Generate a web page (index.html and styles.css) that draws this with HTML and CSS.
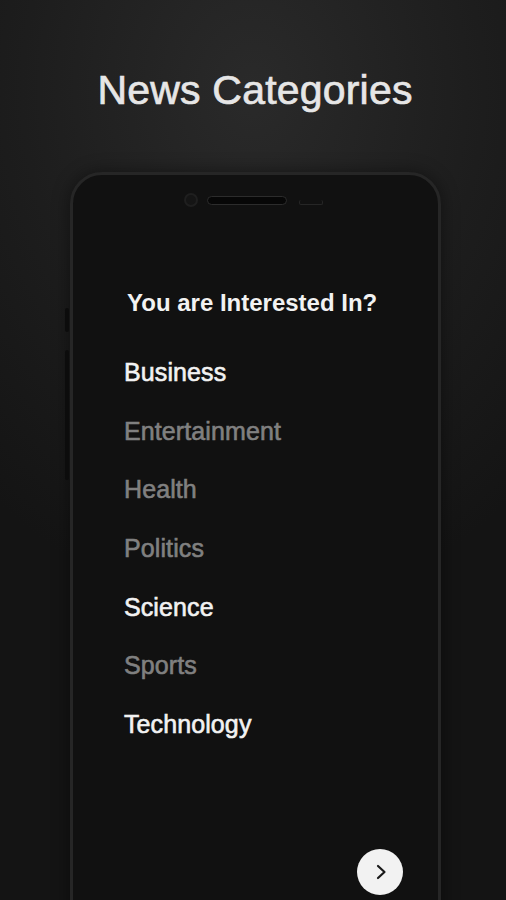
FILE: index.html
```html
<!DOCTYPE html>
<html lang="en">
<head>
<meta charset="utf-8">
<title>News Categories</title>
<link rel="stylesheet" href="styles.css">
</head>
<body>
<div class="screen">
  <h1 class="title">News Categories</h1>
  <div class="phone">
    <span class="side-btn side-btn--short"></span>
    <span class="side-btn side-btn--long"></span>
    <div class="phone-top">
      <span class="camera"></span>
      <span class="speaker"></span>
      <span class="sensor"></span>
    </div>
    <div class="content">
      <h2 class="question">You are Interested In?</h2>
      <ul class="cats">
        <li class="cat on">Business</li>
        <li class="cat">Entertainment</li>
        <li class="cat">Health</li>
        <li class="cat">Politics</li>
        <li class="cat on">Science</li>
        <li class="cat">Sports</li>
        <li class="cat on">Technology</li>
      </ul>
      <div class="actions">
        <button class="next" aria-label="Next">
          <svg width="20" height="20" viewBox="0 0 20 20"><path d="M7 4 L13.5 10 L7 16" fill="none" stroke="#1a1a1a" stroke-width="2.2" stroke-linecap="round" stroke-linejoin="round"/></svg>
        </button>
      </div>
    </div>
  </div>
</div>
</body>
</html>
```
FILE: styles.css
```css
* { box-sizing: border-box; }
html, body {
  margin: 0;
  padding: 0;
  height: 100%;
  overflow: hidden;
}
body {
  background: #141414;
  font-family: "Liberation Sans", Arial, sans-serif;
}
.screen {
  width: 506px;
  height: 900px;
  overflow: hidden;
  background: radial-gradient(ellipse 420px 520px at 253px 90px, #2a2a2a 0%, #1d1d1d 55%, #141414 100%);
  display: flex;
  flex-direction: column;
}
.title {
  margin: 67px 0 0 0;
  text-align: center;
  font-size: 41px;
  line-height: 46px;
  font-weight: normal;
  color: #e6e6e6;
  letter-spacing: 0.2px;
  padding-left: 4px;
  -webkit-text-stroke: 0.7px #e6e6e6;
}
.phone {
  position: relative;
  margin: 59px 0 0 70px;
  width: 371px;
  height: 800px;
  flex: none;
  background: #111111;
  border: 3px solid #262626;
  border-radius: 32px;
  box-shadow: 0 0 18px rgba(0,0,0,0.45);
}
.side-btn {
  position: absolute;
  left: -8px;
  width: 4px;
  background: #0c0c0c;
  border-radius: 2px;
}
.side-btn--short { top: 133px; height: 24px; }
.side-btn--long { top: 175px; height: 130px; }
.phone-top {
  display: flex;
  align-items: center;
  height: 20px;
  margin-top: 15px;
  padding-left: 111px;
}
.camera {
  width: 14px;
  height: 14px;
  border-radius: 50%;
  background: #151515;
  border: 2px solid #1f1f1f;
}
.speaker {
  margin-left: 9px;
  width: 80px;
  height: 9px;
  border-radius: 5px;
  background: #070707;
  border: 1px solid #2c2c2c;
}
.sensor {
  margin-left: 12px;
  margin-top: 5px;
  width: 24px;
  height: 5px;
  border-radius: 2px;
  border: 1px solid #262626;
  border-top: none;
}
.content {
  display: flex;
  flex-direction: column;
  padding: 0 0 0 51px;
}
.question {
  margin: 79px 0 0 3px;
  font-size: 24px;
  line-height: 28px;
  font-weight: bold;
  color: #f2f2f2;
}
.cats {
  list-style: none;
  margin: 40px 0 0 0;
  padding: 0;
  display: flex;
  flex-direction: column;
}
.cat {
  height: 58.7px;
  line-height: 30px;
  font-size: 25px;
  color: #808080;
  letter-spacing: 0.1px;
  -webkit-text-stroke: 0.6px #808080;
}
.cat.on {
  color: #f2f2f2;
  -webkit-text-stroke: 0.6px #f2f2f2;
}
.actions {
  display: flex;
  justify-content: flex-end;
  padding-right: 35px;
  margin-top: 81px;
}
.next {
  width: 46px;
  height: 46px;
  border-radius: 50%;
  border: none;
  background: #f2f2f2;
  display: flex;
  align-items: center;
  justify-content: center;
  padding: 0 0 0 2px;
  cursor: pointer;
}
```
